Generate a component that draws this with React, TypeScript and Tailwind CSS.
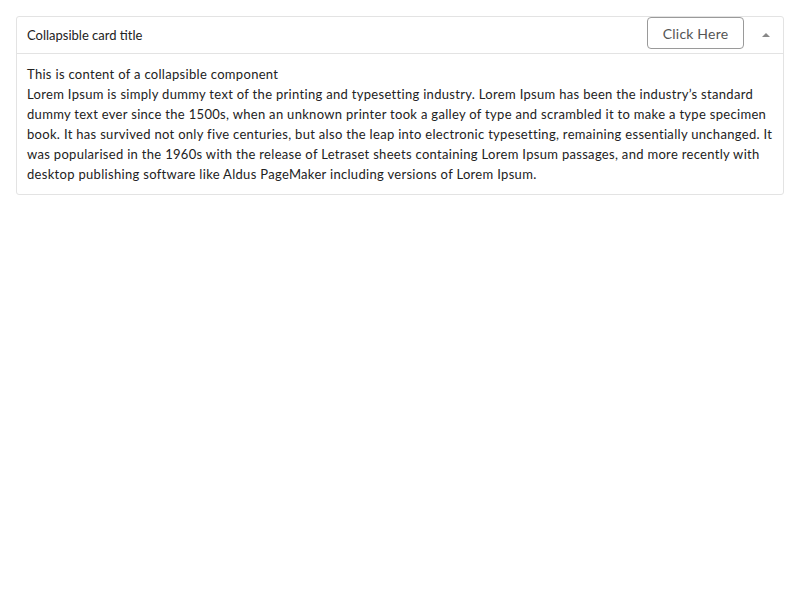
import React from "react";

export default function App() {
  return (
    <div className="w-[800px] h-[600px] bg-white p-4" style={{ fontFamily: "Lato, 'Open Sans', sans-serif" }}>
      <div className="border border-[#e3e3e3] rounded-[3px]">
        <div className="flex items-start h-[37px] border-b border-[#e3e3e3] pl-[10px]">
          <div className="flex-1 h-full flex items-center text-[13px] text-[#222] pt-px">Collapsible card title</div>
          <button className="w-[97px] h-[32px] border border-[#9a9a9a] rounded-[4px] text-[14px] text-[#555] bg-white tracking-[0.2px]">
            Click Here
          </button>
          <div className="w-[39px] h-full flex items-center justify-center">
            <svg width="8" height="4" viewBox="0 0 8 4" className="ml-[4px]">
              <path d="M0 4 L4 0 L8 4 Z" fill="#888" />
            </svg>
          </div>
        </div>
        <div className="px-[10px] pt-[10px] pb-[10px] text-[13px] leading-[20px] text-[#222] tracking-[0.31px]">
          <div>This is content of a collapsible component</div>
          <div>
            Lorem Ipsum is simply dummy text of the printing and typesetting industry. Lorem Ipsum has been the industry’s standard dummy text ever since the 1500s, when an unknown printer took a galley of type and scrambled it to make a type specimen book. It has survived not only five centuries, but also the leap into electronic typesetting, remaining essentially unchanged. It was popularised in the 1960s with the release of Letraset sheets containing Lorem Ipsum passages, and more recently with desktop publishing software like Aldus PageMaker including versions of Lorem Ipsum.
          </div>
        </div>
      </div>
    </div>
  );
}
